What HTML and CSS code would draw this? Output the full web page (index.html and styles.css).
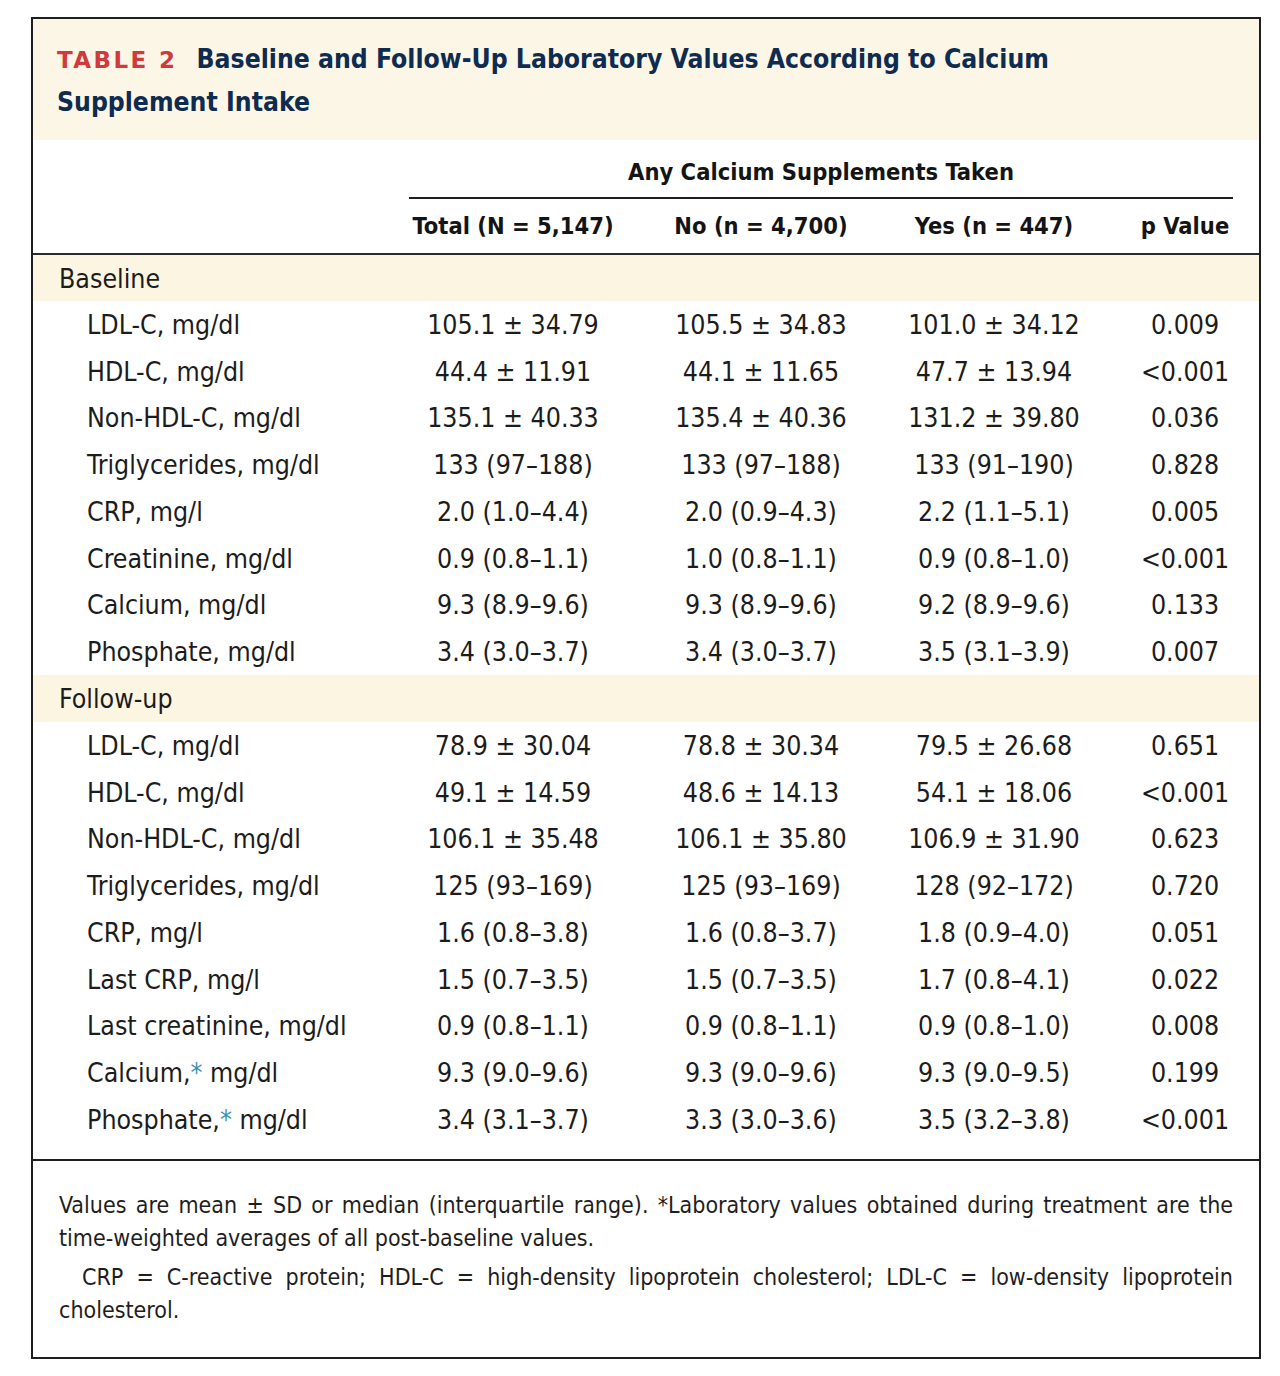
FILE: index.html
```html
<!DOCTYPE html>
<html lang="en">
<head>
<meta charset="utf-8">
<title>Table 2</title>
<link rel="stylesheet" href="styles.css">
</head>
<body>
<div class="frame">
  <div class="caption">
    <span class="tag">TABLE 2</span> <span class="title">Baseline and Follow-Up Laboratory Values According to Calcium Supplement Intake</span>
  </div>
  <table class="data">
    <colgroup>
      <col class="c-label"><col class="c-total"><col class="c-no"><col class="c-yes"><col class="c-p">
    </colgroup>
    <thead>
      <tr class="h1">
        <th></th>
        <th colspan="4"><div class="span-head">Any Calcium Supplements Taken</div></th>
      </tr>
      <tr class="h2">
        <th></th>
        <th>Total (N = 5,147)</th>
        <th>No (n = 4,700)</th>
        <th>Yes (n = 447)</th>
        <th class="pcol">p Value</th>
      </tr>
    </thead>
    <tbody>
      <tr class="group"><td colspan="5">Baseline</td></tr>
      <tr><td class="lbl">LDL-C, mg/dl</td><td>105.1 ± 34.79</td><td>105.5 ± 34.83</td><td>101.0 ± 34.12</td><td class="pcol">0.009</td></tr>
      <tr><td class="lbl">HDL-C, mg/dl</td><td>44.4 ± 11.91</td><td>44.1 ± 11.65</td><td>47.7 ± 13.94</td><td class="pcol">&lt;0.001</td></tr>
      <tr><td class="lbl">Non-HDL-C, mg/dl</td><td>135.1 ± 40.33</td><td>135.4 ± 40.36</td><td>131.2 ± 39.80</td><td class="pcol">0.036</td></tr>
      <tr><td class="lbl">Triglycerides, mg/dl</td><td>133 (97–188)</td><td>133 (97–188)</td><td>133 (91–190)</td><td class="pcol">0.828</td></tr>
      <tr><td class="lbl">CRP, mg/l</td><td>2.0 (1.0–4.4)</td><td>2.0 (0.9–4.3)</td><td>2.2 (1.1–5.1)</td><td class="pcol">0.005</td></tr>
      <tr><td class="lbl">Creatinine, mg/dl</td><td>0.9 (0.8–1.1)</td><td>1.0 (0.8–1.1)</td><td>0.9 (0.8–1.0)</td><td class="pcol">&lt;0.001</td></tr>
      <tr><td class="lbl">Calcium, mg/dl</td><td>9.3 (8.9–9.6)</td><td>9.3 (8.9–9.6)</td><td>9.2 (8.9–9.6)</td><td class="pcol">0.133</td></tr>
      <tr><td class="lbl">Phosphate, mg/dl</td><td>3.4 (3.0–3.7)</td><td>3.4 (3.0–3.7)</td><td>3.5 (3.1–3.9)</td><td class="pcol">0.007</td></tr>
      <tr class="group"><td colspan="5">Follow-up</td></tr>
      <tr><td class="lbl">LDL-C, mg/dl</td><td>78.9 ± 30.04</td><td>78.8 ± 30.34</td><td>79.5 ± 26.68</td><td class="pcol">0.651</td></tr>
      <tr><td class="lbl">HDL-C, mg/dl</td><td>49.1 ± 14.59</td><td>48.6 ± 14.13</td><td>54.1 ± 18.06</td><td class="pcol">&lt;0.001</td></tr>
      <tr><td class="lbl">Non-HDL-C, mg/dl</td><td>106.1 ± 35.48</td><td>106.1 ± 35.80</td><td>106.9 ± 31.90</td><td class="pcol">0.623</td></tr>
      <tr><td class="lbl">Triglycerides, mg/dl</td><td>125 (93–169)</td><td>125 (93–169)</td><td>128 (92–172)</td><td class="pcol">0.720</td></tr>
      <tr><td class="lbl">CRP, mg/l</td><td>1.6 (0.8–3.8)</td><td>1.6 (0.8–3.7)</td><td>1.8 (0.9–4.0)</td><td class="pcol">0.051</td></tr>
      <tr><td class="lbl">Last CRP, mg/l</td><td>1.5 (0.7–3.5)</td><td>1.5 (0.7–3.5)</td><td>1.7 (0.8–4.1)</td><td class="pcol">0.022</td></tr>
      <tr><td class="lbl">Last creatinine, mg/dl</td><td>0.9 (0.8–1.1)</td><td>0.9 (0.8–1.1)</td><td>0.9 (0.8–1.0)</td><td class="pcol">0.008</td></tr>
      <tr><td class="lbl">Calcium,<span class="star">*</span> mg/dl</td><td>9.3 (9.0–9.6)</td><td>9.3 (9.0–9.6)</td><td>9.3 (9.0–9.5)</td><td class="pcol">0.199</td></tr>
      <tr class="last"><td class="lbl">Phosphate,<span class="star">*</span> mg/dl</td><td>3.4 (3.1–3.7)</td><td>3.3 (3.0–3.6)</td><td>3.5 (3.2–3.8)</td><td class="pcol">&lt;0.001</td></tr>
    </tbody>
  </table>
  <div class="notes">
    <p>Values are mean ± SD or median (interquartile range). *Laboratory values obtained during treatment are the time-weighted averages of all post-baseline values.</p>
    <p class="indent">CRP = C-reactive protein; HDL-C = high-density lipoprotein cholesterol; LDL-C = low-density lipoprotein cholesterol.</p>
  </div>
</div>
</body>
</html>
```

FILE: styles.css
```css
* { box-sizing: border-box; }

html, body {
  margin: 0;
  padding: 0;
  background: #ffffff;
}

body {
  padding: 17px 0 0 31px;
  font-family: "DejaVu Sans Condensed", "DejaVu Sans", sans-serif;
  color: #1c1c1c;
}

.frame {
  width: 1230px;
  border: 2px solid #1e1e1e;
  background: #ffffff;
}

.caption {
  background: #fcf6e6;
  padding: 19px 180px 17px 24px;
  font-weight: bold;
  font-size: 26px;
  line-height: 42px;
  height: 121px;
  width: 100%;
}

.tag {
  font-family: "DejaVu Sans", sans-serif;
  font-weight: bold;
  font-size: 23px;
  letter-spacing: 2.4px;
  color: #d03a3d;
  margin-right: 11px;
}

.title {
  font-weight: bold;
  font-size: 26.3px;
  color: #0e2b50;
}

.data {
  width: 100%;
  border-collapse: collapse;
  table-layout: fixed;
  font-size: 26.5px;
}

.c-label { width: 358px; }
.c-total { width: 244px; }
.c-no { width: 252px; }
.c-yes { width: 214px; }
.c-p { width: 158px; }

.data th {
  font-weight: bold;
  font-size: 23.5px;
  padding: 0;
  text-align: center;
  color: #141414;
}

.h1 th { height: 59px; vertical-align: bottom; }

.span-head {
  margin: 0 26px 0 18px;
  padding-bottom: 11px;
  border-bottom: 2px solid #1e1e1e;
}

.h2 th {
  height: 55px;
  border-bottom: 2.5px solid #2a2a2a;
  vertical-align: middle;
}

.data td {
  height: 46.75px;
  padding: 0;
  text-align: center;
  vertical-align: middle;
  white-space: nowrap;
}

.data td.lbl {
  text-align: left;
  padding-left: 54px;
}

.data .pcol { padding-left: 10px; }

.group td {
  background: #fcf5e2;
  text-align: left;
  padding-left: 26px;
  height: 47px;
}

.last td { height: 63px; vertical-align: top; padding-top: 8px; }

.star { color: #3b8fb4; }

.notes {
  border-top: 2px solid #1e1e1e;
  padding: 28px 26px 30px 26px;
  font-size: 23px;
  line-height: 33px;
  color: #1e1e1e;
}

.notes p {
  margin: 0;
  text-align: justify;
}

.notes p + p { margin-top: 6px; }

.notes .indent { text-indent: 23px; }
```
